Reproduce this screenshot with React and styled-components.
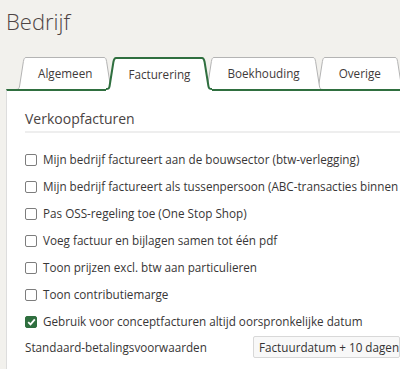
import React from "react";
import styled, { createGlobalStyle } from "styled-components";

const GREEN = "#2f6f3f";
const GREY_EDGE = "#b4b4b4";
const FS = "11.7px";

const Global = createGlobalStyle`
  html, body { margin: 0; padding: 0; }
  body {
    background: #f2f1ed;
    font-family: "Open Sans", "Liberation Sans", sans-serif;
    color: #333;
    overflow: hidden;
  }
`;

const Page = styled.div`
  width: 400px;
  height: 369px;
  padding-left: 6px;
  box-sizing: border-box;
  display: flex;
  flex-direction: column;
`;

const Title = styled.h1`
  margin: 0;
  height: 57px;
  padding-top: 6px;
  box-sizing: border-box;
  font-size: 22px;
  font-weight: 300;
  line-height: 30px;
  color: #4e4444;
`;

const TabBar = styled.div`
  display: flex;
  height: 34px;
  padding-left: 10px;
  margin-bottom: -2px;
  white-space: nowrap;
`;

const Tab = styled.div`
  display: flex;
  height: 34px;
  flex: none;
  margin-left: ${(p) => (p.$first ? "0" : "-8px")};
  position: ${(p) => (p.$active ? "relative" : "static")};
  z-index: ${(p) => (p.$active ? 2 : "auto")};
`;

const TabLabel = styled.div`
  background: #fff;
  border-top: ${(p) => (p.$active ? `2px solid ${GREEN}` : `1px solid ${GREY_EDGE}`)};
  padding: 0 ${(p) => p.$pad}px;
  display: flex;
  align-items: center;
  font-size: ${FS};
  color: #3f3a3a;
  padding-bottom: ${(p) => (p.$active ? "2px" : "3px")};
`;

const Edge = styled.svg`
  display: block;
  flex: none;
  width: 10px;
  height: 34px;
  transform: ${(p) => (p.$right ? "scaleX(-1)" : "none")};
`;

function TabEdge({ active, right }) {
  const sw = active ? 2 : 1;
  const t = sw / 2;
  const color = active ? GREEN : GREY_EDGE;
  const curve = `M0,${33 - t} C2.5,${33 - t} 3.2,31.5 3.6,29 L7.4,${t + 4} C7.9,${t + 1.2} 8.6,${t} 10,${t}`;
  return (
    <Edge $right={right} viewBox="0 0 10 34">
      <path d={`${curve} L10,34 L0,34 Z`} fill="#fff" stroke="none" />
      <path d={curve} fill="none" stroke={color} strokeWidth={sw} />
    </Edge>
  );
}

const Panel = styled.div`
  position: relative;
  z-index: 1;
  flex: 1;
  background: #fff;
  border-top: 2px solid ${GREEN};
  border-left: 1px solid #dddddd;
  padding: 17px 0 0 18px;
`;

const SectionTitle = styled.h2`
  margin: 0 0 13px 0;
  font-size: 14px;
  font-weight: 400;
  line-height: 22px;
  color: #4a4343;
  padding-bottom: 1px;
  border-bottom: 2px solid #eeeeee;
`;

const CheckRow = styled.label`
  display: flex;
  align-items: center;
  height: 27px;
  font-size: ${FS};
  line-height: 27px;
  color: #383636;
  white-space: nowrap;
`;

const Box = styled.span`
  flex: none;
  width: 12px;
  height: 12px;
  box-sizing: border-box;
  margin: 1px 6px 0 0;
  border-radius: 2px;
  border: 1px solid ${(p) => (p.$checked ? GREEN : "#7d7d7d")};
  background: ${(p) => (p.$checked ? GREEN : "#fff")};
  display: flex;
  align-items: center;
  justify-content: center;
`;

const SelectRow = styled.div`
  display: grid;
  grid-template-columns: 228px 1fr;
  align-items: center;
  height: 22px;
  margin-top: 1px;
  font-size: ${FS};
  color: #383636;
  white-space: nowrap;
`;

const SelectBox = styled.div`
  height: 22px;
  box-sizing: border-box;
  border: 1px solid #d8d8d8;
  border-radius: 2px;
  background: #f8f8f8;
  padding-left: 5px;
  line-height: 20px;
  font-size: ${FS};
  color: #333;
  white-space: nowrap;
`;

function Check({ checked, children }) {
  return (
    <CheckRow>
      <Box $checked={checked}>
        {checked && (
          <svg width="9" height="8" viewBox="0 0 9 8">
            <path d="M1.2,4.2 L3.5,6.4 L7.8,1.4" fill="none" stroke="#fff" strokeWidth="1.8" />
          </svg>
        )}
      </Box>
      {children}
    </CheckRow>
  );
}

const tabs = [
  ["Algemeen", 12],
  ["Facturering", 12],
  ["Boekhouding", 13],
  ["Overige", 14],
];
const options = [
  ["Mijn bedrijf factureert aan de bouwsector (btw-verlegging)", false],
  ["Mijn bedrijf factureert als tussenpersoon (ABC-transacties binnen de EU)", false],
  ["Pas OSS-regeling toe (One Stop Shop)", false],
  ["Voeg factuur en bijlagen samen tot één pdf", false],
  ["Toon prijzen excl. btw aan particulieren", false],
  ["Toon contributiemarge", false],
  ["Gebruik voor conceptfacturen altijd oorspronkelijke datum", true],
];

export default function App() {
  return (
    <>
      <Global />
      <Page>
        <Title>Bedrijf</Title>
        <TabBar>
          {tabs.map(([t, pad], i) => {
            const active = t === "Facturering";
            return (
              <Tab key={t} $first={i === 0} $active={active}>
                <TabEdge active={active} />
                <TabLabel $active={active} $pad={pad}>{t}</TabLabel>
                <TabEdge active={active} right />
              </Tab>
            );
          })}
        </TabBar>
        <Panel>
          <SectionTitle>Verkoopfacturen</SectionTitle>
          {options.map(([label, checked]) => (
            <Check key={label} checked={checked}>
              {label}
            </Check>
          ))}
          <SelectRow>
            <span>Standaard-betalingsvoorwaarden</span>
            <SelectBox>Factuurdatum + 10 dagen</SelectBox>
          </SelectRow>
        </Panel>
      </Page>
    </>
  );
}
